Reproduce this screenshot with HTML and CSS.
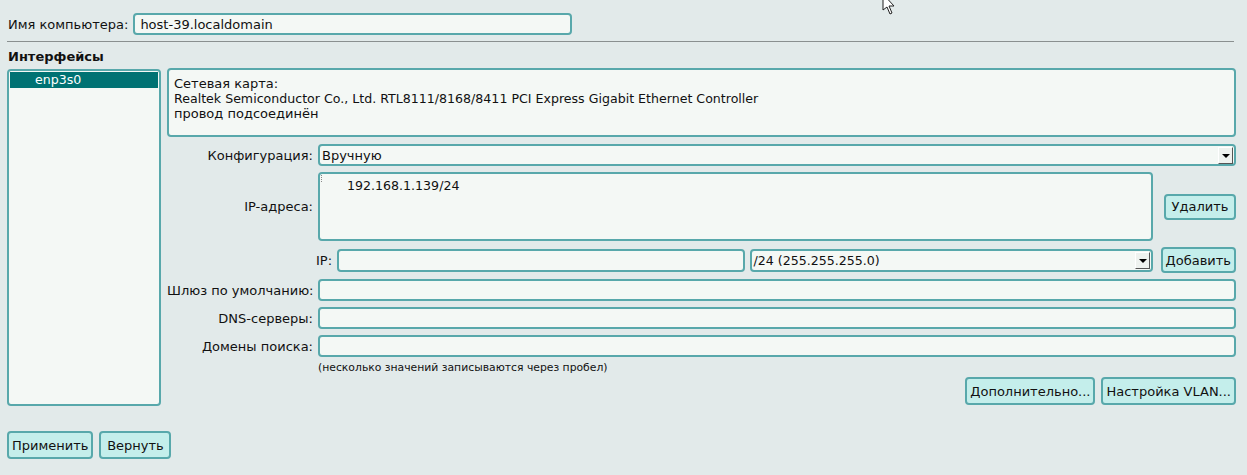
FILE: index.html
```html
<!DOCTYPE html>
<html lang="ru">
<head>
<meta charset="utf-8">
<title>Сеть</title>
<link rel="stylesheet" href="styles.css">
</head>
<body>
<div class="page">
  <div class="host-row">
    <label class="lbl">Имя компьютера:</label>
    <div class="field host-field">host-39.localdomain</div>
  </div>
  <hr class="sep">
  <div class="section-title">Интерфейсы</div>
  <div class="main">
    <div class="iface-list">
      <div class="iface-item selected">enp3s0</div>
    </div>
    <div class="panel">
      <div class="info span3">
        <div>Сетевая карта:</div>
        <div class="latin">Realtek Semiconductor Co., Ltd. RTL8111/8168/8411 PCI Express Gigabit Ethernet Controller</div>
        <div>провод подсоединён</div>
      </div>

      <div class="rlabel">Конфигурация:</div>
      <div class="field combo span2"><span class="ctext">Вручную</span><span class="arrow"></span></div>

      <div class="rlabel">IP-адреса:</div>
      <div class="field textarea"><span class="grip"></span><span class="ip-item">192.168.1.139/24</span></div>
      <div class="btncell"><button class="btn">Удалить</button></div>

      <div></div>
      <div class="ip-row">
        <span class="small-lbl">IP:</span>
        <div class="field grow"></div>
        <div class="field combo grow"><span class="ctext latin">/24 (255.255.255.0)</span><span class="arrow"></span></div>
      </div>
      <div class="btncell"><button class="btn">Добавить</button></div>

      <div class="rlabel">Шлюз по умолчанию:</div>
      <div class="field span2"></div>

      <div class="rlabel">DNS-серверы:</div>
      <div class="field span2"></div>

      <div class="rlabel">Домены поиска:</div>
      <div class="field span2"></div>

      <div></div>
      <div class="hint span2">(несколько значений записываются через пробел)</div>

      <div class="actions span3">
        <button class="btn tall">Дополнительно...</button>
        <button class="btn tall">Настройка VLAN...</button>
      </div>
    </div>
  </div>
  <div class="bottom">
    <button class="btn tall">Применить</button>
    <button class="btn tall">Вернуть</button>
  </div>
</div>
<svg class="cursor" width="16" height="18" viewBox="0 0 16 18"><path d="M1 -6 L1 10 L5 7 L8 14 L10 13 L7 6 L12 6 Z" fill="#ffffff" stroke="#222" stroke-width="1"/></svg>
</body>
</html>
```

FILE: styles.css
```css
html, body {
  margin: 0;
  padding: 0;
  background: #e2eaea;
  font-family: "DejaVu Sans", Verdana, sans-serif;
  font-size: 13px;
  color: #111;
}
.page {
  padding: 13px 11px 0 7px;
}
.host-row {
  display: flex;
  align-items: center;
  gap: 5px;
}
.lbl {
  padding-left: 1px;
}
.field {
  box-sizing: border-box;
  height: 22px;
  border: 2px solid #58a8ab;
  border-radius: 4px;
  background: #f4f8f5;
  display: flex;
  align-items: center;
  padding: 0 3px;
  white-space: nowrap;
  overflow: hidden;
}
.latin {
  font-size: 12.6px;
}
.host-field {
  width: 439px;
  font-size: 13px;
  padding-left: 5px;
}
.sep {
  border: 0;
  border-top: 1px solid #8a9090;
  margin: 6px 2px 0 0;
  height: 0;
}
.section-title {
  font-weight: bold;
  font-size: 13px;
  margin: 7px 0 0 1px;
  height: 15px;
  line-height: 15px;
}
.main {
  display: flex;
  gap: 6px;
  margin-top: 4px;
}
.iface-list {
  box-sizing: border-box;
  width: 154px;
  margin-top: 1px;
  margin-bottom: -1px;
  border: 2px solid #58a8ab;
  border-radius: 4px;
  background: #f4f8f5;
  padding: 1px;
}
.iface-item {
  height: 16px;
  line-height: 15px;
  padding-left: 25px;
  font-size: 12.6px;
}
.iface-item.selected {
  background: #007273;
  color: #ffffff;
}
.panel {
  flex: 1;
  display: grid;
  grid-template-columns: 146px 1fr 78px;
  column-gap: 5px;
  row-gap: 6px;
  align-items: center;
}
.span2 { grid-column: span 2; }
.span3 { grid-column: span 3; }
.info {
  box-sizing: border-box;
  height: 69px;
  border: 2px solid #58a8ab;
  border-radius: 4px;
  background: #f4f8f5;
  padding: 6px 5px;
  line-height: 15px;
  margin-bottom: 1px;
}
.rlabel {
  text-align: right;
  white-space: nowrap;
}
.combo {
  justify-content: space-between;
  padding: 0 1px 0 1px;
}
.combo .ctext {
  padding-left: 1px;
}
.arrow {
  position: relative;
  width: 15px;
  height: 17px;
  background: #eef2ef;
  border-right: 1px solid #555;
  border-bottom: 1px solid #555;
  border-top: 1px solid #fff;
  border-left: 1px solid #fff;
  box-sizing: border-box;
  flex: none;
}
.arrow::after {
  content: "";
  position: absolute;
  left: 3px;
  top: 6px;
  border-left: 4px solid transparent;
  border-right: 4px solid transparent;
  border-top: 4px solid #000;
}
.textarea {
  height: 69px;
  align-items: flex-start;
  padding: 0;
  position: relative;
}
.grip {
  width: 1px;
  height: 7px;
  margin: 1px 0 0 1px;
  border-left: 1px dotted #888;
}
.ip-item {
  margin: 4px 0 0 24px;
  font-size: 12.6px;
}
.btncell {
  display: flex;
  justify-content: flex-end;
}
.btn {
  font-family: "DejaVu Sans", Verdana, sans-serif;
  font-size: 13px;
  color: #111;
  height: 26px;
  min-width: 72px;
  box-sizing: border-box;
  border: 2px solid #58a8ab;
  border-radius: 4px;
  background: #c4eeeb;
  padding: 0 3px;
  margin: 0;
  white-space: nowrap;
}
.btn.tall {
  height: 28px;
}
.ip-row {
  display: flex;
  align-items: center;
  gap: 5px;
  margin-left: -2px;
}
.small-lbl {
  flex: none;
}
.grow {
  flex: 1;
  height: 23px;
}
.hint {
  font-size: 10.8px;
  margin-top: -1px;
  height: 12px;
  line-height: 12px;
}
.actions {
  display: flex;
  justify-content: flex-end;
  gap: 6px;
  margin-top: -3px;
}
.bottom {
  display: flex;
  gap: 6px;
  margin-top: 26px;
}
.cursor {
  position: absolute;
  left: 882px;
  top: 0;
}
```
